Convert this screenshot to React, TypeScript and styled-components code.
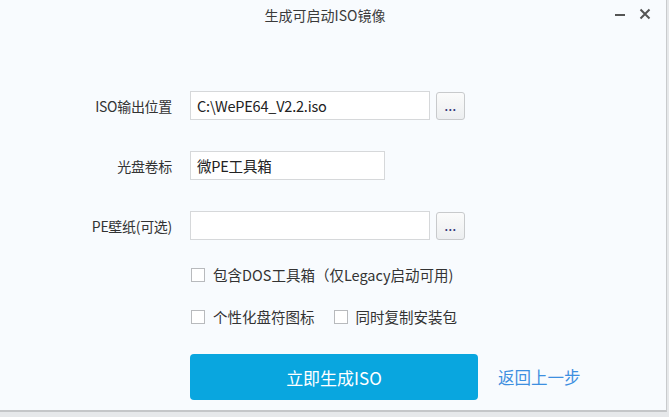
import React from "react";
import styled, { createGlobalStyle } from "styled-components";

const Global = createGlobalStyle`
  html, body { margin: 0; padding: 0; background: #e6e8ea; }
  body { font-family: "Noto Sans CJK SC", "Open Sans", sans-serif; }
  * { box-sizing: border-box; }
`;

const Window = styled.div`
  width: 667px;
  height: 412px;
  background: #f8fbfe;
  border-right: 1px solid #c9cbcd;
  border-bottom: 2px solid #c4c6c8;
  display: flex;
  flex-direction: column;
  color: #333;
`;

const TitleBar = styled.div`
  height: 30px;
  display: flex;
  align-items: center;
  justify-content: center;
  padding-right: 16px;
  position: relative;
`;

const Title = styled.div`
  font-size: 14px;
  color: #3a3a3a;
`;

const WinControls = styled.div`
  position: absolute;
  right: 15px;
  top: 7px;
  display: flex;
  gap: 13px;
  align-items: center;
`;

const CtrlIcon = styled.svg`
  width: 12px;
  height: 14px;
  display: block;
`;

const Form = styled.div`
  display: grid;
  grid-template-columns: 172px auto;
  column-gap: 18px;
  row-gap: 31px;
  margin-top: 61px;
  align-items: center;
`;

const Label = styled.div`
  text-align: right;
  font-size: 14px;
  color: #333;
  letter-spacing: -0.3px;
`;

const Field = styled.div`
  display: flex;
  align-items: center;
  gap: 6px;
`;

const Input = styled.div<{ $w: number }>`
  width: ${(p) => p.$w}px;
  height: 29px;
  background: #fff;
  border: 1px solid #d6d8da;
  font-size: 14.5px;
  color: #222;
  padding: 0 6px;
  display: flex;
  align-items: center;
  letter-spacing: -0.2px;
`;

const BrowseBtn = styled.div`
  width: 29px;
  height: 28px;
  border: 1px solid #c8cacc;
  border-radius: 3px;
  background: linear-gradient(#fbfbfb, #eceef0);
  display: flex;
  align-items: flex-end;
  justify-content: center;
  padding-bottom: 7px;
  font-size: 11px;
  line-height: 1;
  font-weight: bold;
  color: #34387a;
  letter-spacing: 0.5px;
`;

const Options = styled.div`
  margin-left: 190px;
  margin-top: 24px;
  display: flex;
  flex-direction: column;
  gap: 21px;
`;

const OptRow = styled.div`
  display: flex;
  align-items: center;
  gap: 18px;
`;

const Check = styled.label`
  display: flex;
  align-items: center;
  gap: 8px;
  font-size: 14.5px;
  color: #333;
`;

const Box = styled.span`
  width: 14px;
  height: 14px;
  border: 1px solid #b8babd;
  background: #fff;
  display: inline-block;
  margin-left: 1px;
`;

const Actions = styled.div`
  margin-left: 190px;
  margin-top: 27px;
  display: flex;
  align-items: center;
  gap: 20px;
`;

const Primary = styled.div`
  width: 288px;
  height: 46px;
  background: #09a6df;
  border-radius: 4px;
  color: #fff;
  font-size: 17px;
  display: flex;
  align-items: center;
  justify-content: center;
`;

const BackLink = styled.a`
  color: #3d8fe0;
  font-size: 16.5px;
  text-decoration: none;
`;

export default function App() {
  return (
    <>
      <Global />
      <Window>
        <TitleBar>
          <Title>生成可启动ISO镜像</Title>
          <WinControls>
            <CtrlIcon viewBox="0 0 12 14">
              <rect x="1" y="7" width="10" height="2" fill="#555" />
            </CtrlIcon>
            <CtrlIcon viewBox="0 0 12 14">
              <path d="M1.5 2.5 L10.5 11.5 M10.5 2.5 L1.5 11.5" stroke="#555" strokeWidth="2" />
            </CtrlIcon>
          </WinControls>
        </TitleBar>
        <Form>
          <Label>ISO输出位置</Label>
          <Field>
            <Input $w={240}>C:\WePE64_V2.2.iso</Input>
            <BrowseBtn>...</BrowseBtn>
          </Field>
          <Label>光盘卷标</Label>
          <Field>
            <Input $w={195}>微PE工具箱</Input>
          </Field>
          <Label>PE壁纸(可选)</Label>
          <Field>
            <Input $w={240} />
            <BrowseBtn>...</BrowseBtn>
          </Field>
        </Form>
        <Options>
          <OptRow>
            <Check>
              <Box />
              包含DOS工具箱（仅Legacy启动可用)
            </Check>
          </OptRow>
          <OptRow>
            <Check>
              <Box />
              个性化盘符图标
            </Check>
            <Check>
              <Box />
              同时复制安装包
            </Check>
          </OptRow>
        </Options>
        <Actions>
          <Primary>立即生成ISO</Primary>
          <BackLink>返回上一步</BackLink>
        </Actions>
      </Window>
    </>
  );
}
